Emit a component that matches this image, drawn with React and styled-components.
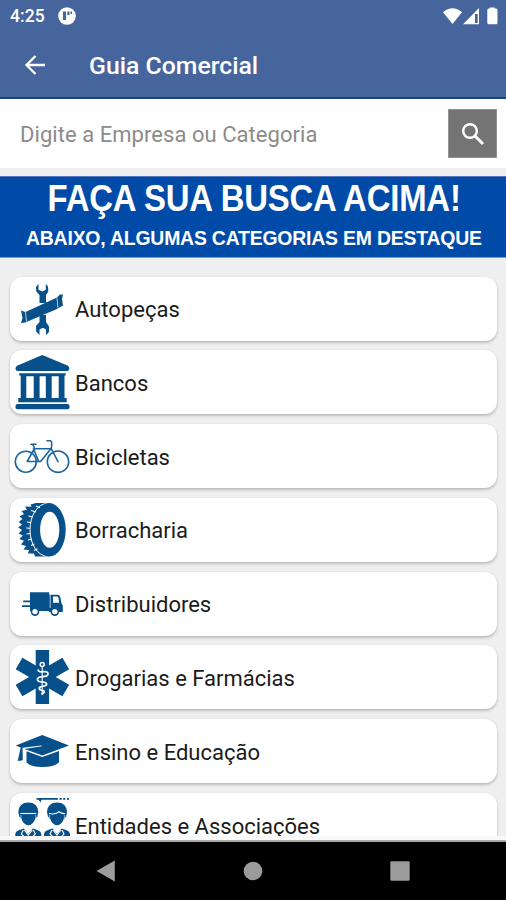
import React from 'react';
import styled, { createGlobalStyle } from 'styled-components';

const GlobalStyle = createGlobalStyle`
  * {
    box-sizing: border-box;
  }

  body {
    margin: 0;
    background: #000;
    font-family: Roboto, 'Liberation Sans', sans-serif;
  }
`;

const Screen = styled.div`
  display: flex;
  flex-direction: column;
  width: 506px;
  height: 900px;
  overflow: hidden;
  background: #efeff0;
`;

const Header = styled.header`
  flex: none;
  height: 99px;
  background: #46659d;
  border-bottom: 2px solid #174783;
  color: #fff;
`;

const StatusBar = styled.div`
  display: flex;
  align-items: center;
  height: 32px;
  padding: 0 7px 0 10px;
`;

const Clock = styled.span`
  font-size: 17.5px;
  font-weight: 500;
  line-height: 32px;
  letter-spacing: 0.1px;
  margin-right: 13px;
`;

const StatusIcons = styled.div`
  display: flex;
  align-items: center;
  margin-left: auto;
`;

const AppBar = styled.div`
  display: flex;
  align-items: center;
  height: 66px;
  padding-left: 24px;
`;

const Title = styled.h1`
  margin: 2px 0 0 43px;
  font-size: 24.8px;
  font-weight: 500;
  line-height: 30px;
`;

const SearchBar = styled.div`
  display: flex;
  flex: none;
  align-items: center;
  height: 69px;
  padding: 0 9px 0 20px;
  background: #fff;
`;

const SearchInput = styled.input`
  flex: 1;
  min-width: 0;
  padding: 2px 0 0;
  border: none;
  outline: none;
  background: transparent;
  font-family: inherit;
  font-size: 22px;
  letter-spacing: 0.05px;
  color: #222;

  &::placeholder {
    color: #8b8b8b;
    opacity: 1;
  }
`;

const SearchButton = styled.button`
  display: flex;
  align-items: center;
  justify-content: center;
  width: 49px;
  height: 49px;
  padding: 0;
  border: 1px solid #929292;
  background: #747474;
  color: #fff;
`;

const Banner = styled.div`
  display: flex;
  flex: none;
  flex-direction: column;
  align-items: center;
  height: 82px;
  margin-top: 8px;
  border-top: 1px solid #5878bd;
  border-bottom: 1px solid #8294cd;
  background: #014ba8;
  color: #fff;
  font-family: 'Liberation Sans', Arial, sans-serif;
  font-weight: 700;
  white-space: nowrap;
`;

const BannerTitle = styled.div`
  padding-left: 2px;
  font-size: 36px;
  line-height: 44px;
  letter-spacing: -0.2px;
  transform: scaleX(0.913);
`;

const BannerText = styled.div`
  margin-top: 2px;
  padding-left: 1px;
  font-size: 20.5px;
  line-height: 30px;
  letter-spacing: -0.2px;
  transform: scaleX(0.946);
`;

const CategoryList = styled.div`
  display: flex;
  flex: 1;
  flex-direction: column;
  gap: 9.8px;
  min-height: 0;
  padding: 18.5px 9px 0 10px;
  overflow: hidden;
`;

const CategoryCard = styled.div`
  display: flex;
  flex: none;
  align-items: center;
  height: 64px;
  padding-left: 4px;
  border-radius: 12px;
  background: #fff;
  box-shadow: 0 2px 3px rgba(0, 0, 0, 0.2), 0 0 2px rgba(0, 0, 0, 0.08);
`;

const CategoryIcon = styled.svg`
  flex: none;
  width: 56px;
  height: 56px;
  margin-right: 5px;
  fill: #07508a;
`;

const CategoryName = styled.span`
  padding-top: 3px;
  font-size: 22px;
  line-height: 28px;
  letter-spacing: 0;
  color: #1b1b1b;
  white-space: nowrap;
`;

const ListEdge = styled.div`
  flex: none;
  height: 6px;
  border-bottom: 2px solid #a9a9a9;
  background: #f8f8f8;
`;

const NavBar = styled.nav`
  display: flex;
  flex: none;
  align-items: center;
  justify-content: space-between;
  height: 58px;
  padding: 0 96px 0 96px;
  background: #000;
`;

function WrenchIcon() {
  return (
    <>
      <path d="M24.5 3 22 6 22.3 10.5 25.5 14V22H32V14L34.3 10.5 34 5.5 31.8 3V8.7L28.3 10.5 24.5 8.7Z" />
      <path d="M25.5 34V41L22 45 22.2 50.5 25.5 54V48.5L29 46.7 32 48.5V54L35 51V45.5L32 41V34Z" />
      <path d="M7 29.5 11.5 31 43 16.5 46 13.5 49 13.5 48 18 49 24.5 43 28 13.5 40.5 11 41.5 7 42 8.5 37Z" />
      <path d="M11.5 31 12.5 40.5M43 17 44 27.5" stroke="#fff" strokeWidth="0.7" />
    </>
  );
}

function BankIcon() {
  return (
    <>
      <path d="M28.3 1 54 11.8Q55.5 13 55.3 15Q55 17 53 17H4Q1.8 17 1.5 15Q1.3 13 3 11.8Z" />
      <path d="M5.2 19.2H51.7V21.5H50.5V44H52.7V48.3H4.3V44H6.7V21.5H5.2Z" />
      <rect x="1.5" y="50" width="54" height="5.3" rx="2" />
      <path d="M12.3 22.3H19.7V44H12.3ZM25.6 22.3H31.8V44H25.6ZM37.7 22.3H44.7V44H37.7Z" fill="#fff" />
    </>
  );
}

function BikeIcon() {
  return (
    <g fill="none" stroke="#1b659d" strokeWidth="1.6" strokeLinecap="round" strokeLinejoin="round">
      <circle cx="11.8" cy="33.7" r="10.5" />
      <circle cx="44" cy="33.7" r="10.7" />
      <path d="M17 16.2H22M19 16.5 20.5 20.5 13.2 33.5H26.5L37 20.7H19.5L24.5 33" />
      <path d="M33 12.8H36.5Q38 13 37.7 17L37.2 20.5 44 33.7" />
    </g>
  );
}

function TireIcon() {
  return (
    <>
      <path d="M35 1 22 1 16.5 2.6 17.5 4.7 11 4.5 13 7.7 7.5 9 10 12 5.5 14.5 8.5 17 4.7 20 8 22.5 4.2 25.5 8 28 4.6 31.5 8.8 33.5 5.4 37 10 38.8 7 42.5 12 44 9.5 47.5 15 48 14 51.5 20 51.5 21 54.5 35 54.5Z" />
      <ellipse cx="33.3" cy="27.8" rx="17.3" ry="26.3" fill="none" stroke="#fff" strokeWidth="1" />
      <path d="M22 4 26 6M17 8.5 22 10M14.5 14 18.5 15M13 20 17 20.5M12.3 26 16 26.3M12.5 32 16.5 31.5M14 38 18 37M17 43.5 20.5 42M20 48.5 24 46.5" stroke="#fff" strokeWidth="1.1" />
      <ellipse cx="35.2" cy="27.8" rx="16.5" ry="26.7" />
      <ellipse cx="35.7" cy="27.8" rx="9.6" ry="18" fill="#fff" />
    </>
  );
}

function TruckIcon() {
  return (
    <>
      <path d="M16 16.2H35.2V35H16V31H8V29.2H16V26.3H9.2V24.6H16Z" />
      <path d="M35 18.8H43.5Q45.6 18.8 46.3 21L47.5 27.5 48.8 29.5V36H35Z" />
      <path d="M39 20.5H43Q44.2 20.5 44.5 22L45.2 26.8H39Z" fill="#fff" />
      <path d="M36.2 18.5V32" stroke="#fff" strokeWidth="0.7" />
      <circle cx="21" cy="35.6" r="4.3" />
      <circle cx="40.8" cy="35.6" r="4.3" />
      <circle cx="21" cy="35.6" r="2.7" fill="#fff" />
      <circle cx="40.8" cy="35.6" r="2.7" fill="#fff" />
    </>
  );
}

function MedicalIcon() {
  return (
    <>
      <rect x="21.7" y="1" width="13.4" height="54" />
      <rect x="21.7" y="1" width="13.4" height="54" transform="rotate(60 28.4 28)" />
      <rect x="21.7" y="1" width="13.4" height="54" transform="rotate(-60 28.4 28)" />
      <g fill="none" stroke="#fff">
        <circle cx="28.2" cy="15.6" r="2" strokeWidth="1.5" />
        <path d="M28.2 18V45" strokeWidth="1.1" />
        <path d="M24 20.5Q24.5 23.5 29 22.7Q34.3 22.2 34 25Q33.6 27.5 28.5 27.7Q23.2 28.3 23.4 30.7Q23.8 33 28.5 33Q32.8 33.2 32.7 35.2Q32.4 37.1 28.5 37.3Q25 37.7 25.2 39.5Q25.5 41 28 41.3Q30.5 41.5 30.3 43.1L27.5 45.5" strokeWidth="1.7" />
      </g>
    </>
  );
}

function GraduationIcon() {
  return (
    <>
      <path d="M28.3 12 55 22.4 28.3 32.4 10.5 26 27.8 23.2 27.5 22.6 8.5 24.8 8.8 37.3 3.7 38 6.7 24.5 1.8 22.4Z" />
      <path d="M12.5 28.2 28.3 34 45 28V39.5Q40 44 28.3 44Q17 44 12.5 39.5Z" />
    </>
  );
}

function PersonShape({ x, fringe }) {
  return (
    <g transform={`translate(${x} 0)`}>
      <path d="M-10 15Q-9.5 5.5 0 5.5T10 15L9 20H7.5Q5 28.3 0 28.3T-7.5 20H-9Z" />
      <path d={fringe ? 'M-8 16.5Q-1 18 2 14.7Q5 17 8 16.5' : 'M-8 16.5H8'} fill="none" stroke="#fff" strokeWidth="1.1" />
      <path d="M-7.5 18V21.5M7.5 18V21.5" stroke="#6fa0c4" strokeWidth="1.3" />
      <path d="M-13 42V37Q-12.5 34-9 33L-4.5 31.5 0 37 4.5 31.5 9 33Q12.5 34 13 37V42Z" />
      <path d="M-5 33-7 37-2 42M5 33 7 37 2 42M-4 33 0 38 4 33" fill="none" stroke="#fff" strokeWidth="1.1" />
    </g>
  );
}

function PeopleIcon() {
  return (
    <>
      <path d="M22.5 1H44V2.7H27.5L26.5 5.5 24.5 2.7H22.5Z" />
      <path d="M45.5 1H47.7V2.7H45.5ZM49.2 1H51.3V2.7H49.2ZM53 1H55V2.7H53Z" />
      <PersonShape x={14.3} />
      <PersonShape x={43} fringe />
    </>
  );
}

const categories = [
  { name: 'Autopeças', icon: WrenchIcon },
  { name: 'Bancos', icon: BankIcon },
  { name: 'Bicicletas', icon: BikeIcon },
  { name: 'Borracharia', icon: TireIcon },
  { name: 'Distribuidores', icon: TruckIcon },
  { name: 'Drogarias e Farmácias', icon: MedicalIcon },
  { name: 'Ensino e Educação', icon: GraduationIcon },
  { name: 'Entidades e Associações', icon: PeopleIcon },
];

function App() {
  return (
    <Screen>
      <GlobalStyle />
      <Header>
        <StatusBar>
          <Clock>4:25</Clock>
          <svg width="18" height="18" viewBox="0 0 18 18">
            <circle cx="9" cy="9" r="8.8" fill="#fff" />
            <path d="M5 4.5H8V13H5ZM9.3 4.5H11.5V8H9.3ZM12.5 4.5H14V7H12.5Z" fill="#46659d" />
          </svg>
          <StatusIcons>
            <svg width="56" height="20" viewBox="0 0 56 20" fill="#fff">
              <path d="M0 6.2Q9.5-1.5 19 6.2L9.5 18Z" />
              <path d="M36 2V18.3H20Z" />
              <path d="M32 8H34.7V17H32Z" fill="#46659d" />
              <path d="M46.8 2.5V1.5H51.5V2.5H53Q54.5 2.5 54.5 4V16.8Q54.5 18.3 53 18.3H45.8Q44.3 18.3 44.3 16.8V4Q44.3 2.5 45.8 2.5Z" />
            </svg>
          </StatusIcons>
        </StatusBar>
        <AppBar>
          <svg width="22" height="22" viewBox="0 0 22 22" fill="none" stroke="#fff" strokeWidth="2.3">
            <path d="M21 11H3M11.5 2 2.5 11 11.5 20" />
          </svg>
          <Title>Guia Comercial</Title>
        </AppBar>
      </Header>

      <SearchBar>
        <SearchInput type="text" placeholder="Digite a Empresa ou Categoria" />
        <SearchButton aria-label="Buscar">
          <svg width="24" height="24" viewBox="0 0 24 24" fill="none" stroke="#fff">
            <circle cx="9" cy="9" r="6.8" strokeWidth="2.4" />
            <path d="M14 14 22 22" strokeWidth="3" />
          </svg>
        </SearchButton>
      </SearchBar>

      <Banner>
        <BannerTitle>FAÇA SUA BUSCA ACIMA!</BannerTitle>
        <BannerText>ABAIXO, ALGUMAS CATEGORIAS EM DESTAQUE</BannerText>
      </Banner>

      <CategoryList>
        {categories.map(({ name, icon: Icon }) => (
          <CategoryCard key={name}>
            <CategoryIcon viewBox="0 0 56 56">
              <Icon />
            </CategoryIcon>
            <CategoryName>{name}</CategoryName>
          </CategoryCard>
        ))}
      </CategoryList>

      <ListEdge />
      <NavBar>
        <svg width="19" height="22" viewBox="0 0 19 22">
          <path d="M0.5 11 18.8 0.5V21.5Z" fill="#9b9b9b" />
        </svg>
        <svg width="20" height="20" viewBox="0 0 20 20">
          <circle cx="10" cy="10" r="9.3" fill="#9b9b9b" />
        </svg>
        <svg width="20" height="20" viewBox="0 0 20 20">
          <rect x="0.3" y="0.3" width="19.4" height="19.4" rx="1.2" fill="#9b9b9b" />
        </svg>
      </NavBar>
    </Screen>
  );
}

export default App;
